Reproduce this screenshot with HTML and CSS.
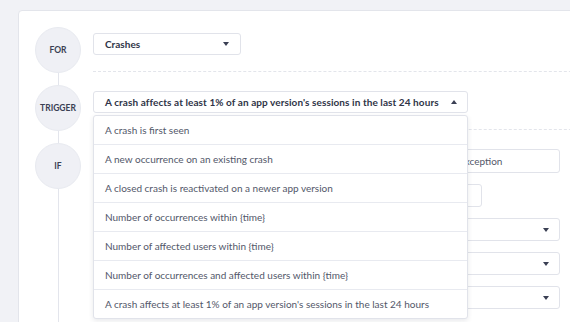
FILE: index.html
```html
<!DOCTYPE html>
<html lang="en">
    <head>
        <meta charset="UTF-8">
        <title>Alert rule</title>
        <link rel="stylesheet" href="styles.css">
    </head>
    <body>
        <div class="card">
            <div class="steps">
                <div class="step">
                    <div class="badge">For</div>
                    <div class="step-body">
                        <div class="select select-for">
                            <span>Crashes</span>
                            <i class="caret"></i>
                        </div>
                    </div>
                </div>

                <div class="step">
                    <div class="badge">Trigger</div>
                    <div class="step-body">
                        <div class="menu-wrap">
                            <div class="select select-trigger">
                                <span>A crash affects at least 1% of an app version's sessions in the last 24 hours</span>
                                <i class="caret up"></i>
                            </div>
                            <ul class="menu">
                                <li>A crash is first seen</li>
                                <li>A new occurrence on an existing crash</li>
                                <li>A closed crash is reactivated on a newer app version</li>
                                <li>Number of occurrences within {time}</li>
                                <li>Number of affected users within {time}</li>
                                <li>Number of occurrences and affected users within {time}</li>
                                <li>A crash affects at least 1% of an app version's sessions in the last 24 hours</li>
                            </ul>
                        </div>
                    </div>
                </div>

                <div class="step step-last">
                    <div class="badge">If</div>
                    <div class="step-body conditions">
                        <div class="cond-row">
                            <div class="input input-class">Exception</div>
                        </div>
                        <div class="cond-row">
                            <div class="input input-num"></div>
                        </div>
                        <div class="cond-row">
                            <div class="select select-cond"><i class="caret"></i></div>
                        </div>
                        <div class="cond-row">
                            <div class="select select-cond"><i class="caret"></i></div>
                        </div>
                        <div class="cond-row">
                            <div class="select select-cond"><i class="caret"></i></div>
                        </div>
                    </div>
                </div>
            </div>
        </div>
    </body>
</html>
```

FILE: styles.css
```css
/* General Styles */
html {
    overflow: hidden;
}

body {
    margin: 0;
    padding: 10px 0 0 18px;
    background-color: #f1f2f6;
    font-family: 'Lato', 'Liberation Sans', sans-serif;
    font-size: 10px;
    color: #2f3447;
    overflow: hidden;
    height: 312px;
}

.card {
    width: 620px;
    height: 340px;
    box-sizing: border-box;
    background-color: white;
    border: 1px solid #e3e5eb;
    border-radius: 4px;
    padding: 16px 0 0 16px;
}

/* timeline rail: line runs behind the circles */
.steps {
    background: linear-gradient(#e3e5ec, #e3e5ec) no-repeat 23px 0 / 1px 100%;
    min-height: 320px;
}

.step {
    display: flex;
    gap: 12px;
    margin-bottom: 12px;
}

.badge {
    flex: none;
    width: 46px;
    height: 46px;
    border-radius: 50%;
    background-color: #eff0f5;
    border: 1px solid #e8eaf0;
    box-sizing: border-box;
    display: flex;
    align-items: center;
    justify-content: center;
    font-size: 8.5px;
    font-weight: bold;
    text-transform: uppercase;
    color: #3a3f53;
}

.step-body {
    flex: 1;
    height: 45px;
    padding-top: 6px;
    box-sizing: border-box;
    border-bottom: 1px dashed #e3e5eb;
}

.select {
    height: 22px;
    box-sizing: border-box;
    border: 1px solid #e1e3ea;
    border-radius: 3px;
    background-color: white;
    display: flex;
    align-items: center;
    justify-content: space-between;
    padding: 0 11px 0 11px;
    font-weight: bold;
    color: #2f3447;
}

.select-for {
    width: 148px;
}

.select-trigger {
    width: 375px;
    padding-right: 10px;
    letter-spacing: 0.08px;
}

.caret {
    width: 0;
    height: 0;
    border-left: 3.5px solid transparent;
    border-right: 3.5px solid transparent;
    border-top: 4px solid #3a3f53;
}

.caret.up {
    border-top: 0;
    border-bottom: 4px solid #3a3f53;
}

/* dropdown menu */
.menu-wrap {
    position: relative;
    width: 375px;
}

.menu {
    position: absolute;
    top: 24px;
    left: 0;
    z-index: 2;
    width: 375px;
    box-sizing: border-box;
    margin: 0;
    padding: 0;
    list-style: none;
    background-color: white;
    border: 1px solid #e1e3ea;
    border-radius: 3px;
    box-shadow: 0 2px 5px rgba(40, 45, 70, 0.1);
}

.menu li {
    height: 29px;
    box-sizing: border-box;
    display: flex;
    align-items: center;
    padding: 0 0 1px 11px;
    color: #525769;
    border-top: 1px solid #e8eaf0;
}

.menu li:first-child {
    border-top: 0;
    height: 28px;
}

/* IF conditions */
.step-last {
    margin-bottom: 0;
}

.conditions {
    height: auto;
    border-bottom: 0;
    display: flex;
    flex-direction: column;
    gap: 11px;
    padding-top: 6px;
}

.cond-row {
    display: flex;
    justify-content: flex-end;
    width: 467px;
}

.input {
    height: 24px;
    box-sizing: border-box;
    border: 1px solid #e1e3ea;
    border-radius: 3px;
    display: flex;
    align-items: center;
    padding-left: 10px;
    color: #525769;
}

.input-class {
    width: 112px;
}

.input-num {
    width: 100px;
    height: 23px;
    margin-right: 78px;
}

.select-cond {
    width: 200px;
    height: 23px;
    font-weight: normal;
    padding-right: 10px;
    justify-content: flex-end;
}
```
